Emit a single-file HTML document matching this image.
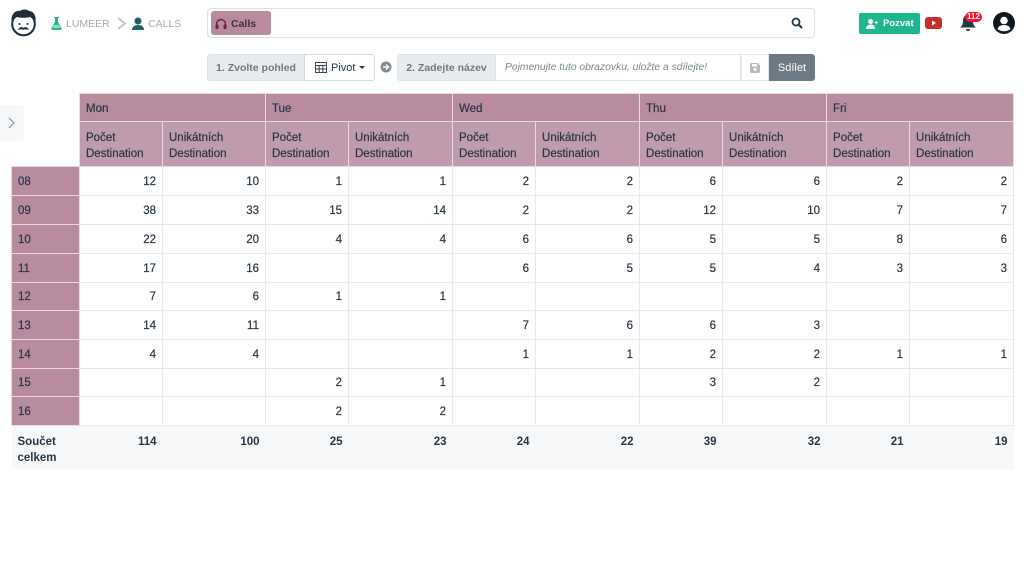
<!DOCTYPE html>
<html><head><meta charset="utf-8">
<style>
*{box-sizing:border-box}
html,body{margin:0;padding:0;width:1024px;height:564px;overflow:hidden;background:#fff;font-family:"Liberation Sans",sans-serif;color:#253746}
.a{position:absolute}
table{position:absolute;left:11px;top:93px;width:1002px;border-collapse:collapse;table-layout:fixed;font-size:11.5px;color:#253746;-webkit-text-stroke:.2px #253746}
td,th{padding:1px 6px 0;font-weight:normal;text-align:right;border:1px solid #e6e9ed;overflow:hidden}
.h1{background:#b88b9f;border:1px solid #e9dbe1;text-align:left;height:28px;padding-top:2px}
.h2{background:#c09bad;border:1px solid #e9dbe1;text-align:left;line-height:16px;height:45px;padding-top:4px}
.r{background:#b88b9f;border:1px solid #e9dbe1;text-align:left}
.e{border:0;background:transparent}
tr.f td{background:#f6f8fa;border:0;font-weight:bold;vertical-align:top;padding-top:8px;line-height:16px;height:44px;-webkit-text-stroke:0}
.ft{font-size:11px;display:flex;align-items:center}
.grp{background:#e9ecef;border:1px solid #dfe3e7;color:#6c7a84;font-weight:bold;font-size:10.5px;height:27px;line-height:27px;text-align:center}
.tab{z-index:2}
</style></head><body>

<svg class="a" style="left:10px;top:8px" width="27" height="29" viewBox="0 0 27 29">
<circle cx="13.5" cy="16" r="11.3" fill="#fff" stroke="#1f2d38" stroke-width="2"/>
<path d="M2 15C0 7 5 2 10 3c2-2 7-2 9 0 5 0 8 6 6 12-1-3-3-5-5-6-4 1-9 1-13 0-2 1-4 3-5 6z" fill="#1f2d38"/>
<circle cx="9.5" cy="16" r="1" fill="#1f2d38"/><circle cx="17.5" cy="16" r="1" fill="#1f2d38"/>
<path d="M8 22c1-3 4-3.500 5.500-2 1.500-1.500 4.500-1 5.500 2-2-.8-3.800-.8-5.500-.3-1.700-.5-3.500-.5-5.500.3z" fill="#1f2d38"/>
</svg>

<svg class="a" style="left:51px;top:17px" width="11" height="13" viewBox="0 0 11 13"><path d="M3 0h5v1H7v4l4 7-1 1H1L0 12l4-7V1H3z" fill="#2bb48c"/><path d="M3 8h5l1.500 3h-8z" fill="#8fdcc4"/></svg>
<div class="a" style="left:66px;top:18px;font-size:10.500px;color:#a0adb4;line-height:13px">LUMEER</div>
<svg class="a" style="left:116px;top:17px" width="11" height="13" viewBox="0 0 11 13"><path d="M2 1l7 5.500L2 12" fill="none" stroke="#b4bdc3" stroke-width="1.500"/></svg>
<svg class="a" style="left:132px;top:17px" width="12" height="13" viewBox="0 0 12 13"><circle cx="6" cy="4" r="3.500" fill="#1f5f63"/><path d="M0 13c0-3 2-5 6-5s6 2 6 5z" fill="#1f5f63"/></svg>
<div class="a" style="left:148px;top:18px;font-size:10.500px;color:#a0adb4;line-height:13px">CALLS</div>

<div class="a" style="left:207px;top:8px;width:608px;height:30px;border:1px solid #dde2e8;border-radius:4px;background:#fff"></div>
<div class="a ft" style="left:211px;top:11px;width:60px;height:24px;background:#b88b9f;border-radius:3px;font-weight:bold;color:#3a3440;font-size:10.500px;padding-top:1px">
<svg style="margin-left:4px;margin-right:4px" width="12" height="12" viewBox="0 0 12 12"><path d="M1.500 8V6a4.500 4.500 0 0 1 9 0v2" fill="none" stroke="#6e1f45" stroke-width="1.400"/><rect x="0.500" y="6.500" width="3" height="4.500" rx="1" fill="#6e1f45"/><rect x="8.500" y="6.500" width="3" height="4.500" rx="1" fill="#6e1f45"/></svg>Calls</div>
<svg class="a" style="left:791px;top:17px" width="12" height="12" viewBox="0 0 12 12"><circle cx="5" cy="5" r="3.500" fill="none" stroke="#253746" stroke-width="1.800"/><path d="M7.500 7.500L11 11" stroke="#253746" stroke-width="2.200"/></svg>

<div class="a ft" style="left:859px;top:13px;width:61px;height:21px;background:#1fb58d;border-radius:2px;color:#fff;font-weight:bold;font-size:9.500px">
<svg style="margin-left:7px;margin-right:5px" width="12" height="10" viewBox="0 0 12 10"><circle cx="4.500" cy="2.500" r="2.500" fill="#fff"/><path d="M0 10c0-3 2-4.500 4.500-4.500S9 7 9 10z" fill="#fff"/><path d="M8.500 3.500h3.500M10.200 1.800v3.500" stroke="#fff" stroke-width="1.100"/></svg>Pozvat</div>
<svg class="a" style="left:925px;top:17px" width="17" height="12" viewBox="0 0 17 12"><rect width="17" height="12" rx="3" fill="#c4302b"/><path d="M7 3.500L11 6 7 8.500z" fill="#fff"/></svg>
<svg class="a" style="left:960px;top:14px" width="16" height="18" viewBox="0 0 16 18"><path d="M8 1c-3 0-5 2-5 6 0 3-1 5-3 6.500h16C14 12 13 10 13 7c0-4-2-6-5-6z" fill="#253746"/><path d="M6 15h4a2 2 0 0 1-4 0z" fill="#253746"/></svg>
<div class="a" style="left:965px;top:12px;width:17px;height:10px;background:#f5142c;border-radius:5px;color:#fff;font-size:8px;font-weight:bold;line-height:10px;text-align:center">112</div>
<svg class="a" style="left:993px;top:12px" width="22" height="22" viewBox="0 0 22 22"><circle cx="11" cy="11" r="11" fill="#10181f"/><circle cx="11" cy="8.500" r="3.800" fill="#fff"/><path d="M4.500 17c1-3 3.500-4 6.500-4s5.500 1 6.500 4c-3.500 3-9.500 3-13 0z" fill="#fff"/></svg>

<div class="a grp" style="left:207px;top:54px;width:98px;border-radius:3px 0 0 3px">1. Zvolte pohled</div>
<div class="a ft" style="left:304px;top:54px;width:71px;height:27px;border:1px solid #d5dae0;border-radius:0 3px 3px 0;color:#253746;background:#fff">
<svg style="margin-left:10px;margin-right:4px" width="12" height="11" viewBox="0 0 12 11"><path d="M.5.500h11v10H.5zM.5 3.500h11M.5 7h11M4.200 3.500v7M7.800 3.500v7" fill="none" stroke="#3a4853" stroke-width="1"/></svg>Pivot
<span style="margin-left:4px;border-top:3px solid #253746;border-left:3px solid transparent;border-right:3px solid transparent"></span></div>
<svg class="a" style="left:380px;top:61px" width="12" height="12" viewBox="0 0 12 12"><circle cx="6" cy="6" r="5.500" fill="#7d8b93"/><path d="M3 6h5M6 3.500L8.500 6 6 8.500" fill="none" stroke="#fff" stroke-width="1.400"/></svg>
<div class="a grp" style="left:397px;top:54px;width:99px;border-radius:3px 0 0 3px">2. Zadejte název</div>
<div class="a" style="left:496px;top:54px;width:245px;height:27px;border:1px solid #e3e6ea;border-left:0;font-style:italic;font-size:10.300px;line-height:26px;padding-left:9px;color:#78868f;white-space:nowrap">Pojmenujte tuto obrazovku, uložte a sdílejte!</div>
<div class="a" style="left:741px;top:54px;width:28px;height:27px;border:1px solid #e3e6ea;border-left:1px solid #e3e6ea"></div>
<svg class="a" style="left:750px;top:63px" width="10" height="10" viewBox="0 0 10 10"><path d="M0 1l1-1h6.500L10 2.500V9l-1 1H1L0 9z" fill="#b4bcc2"/><rect x="2" y="1" width="5" height="2.500" fill="#fff"/><circle cx="5" cy="6.500" r="1.500" fill="#fff"/></svg>
<div class="a" style="left:769px;top:54px;width:46px;height:27px;background:#6c7a85;border-radius:0 3px 3px 0;color:#fff;font-size:11px;line-height:28px;text-align:center">Sdílet</div>

<div class="a tab" style="left:0;top:105px;width:24px;height:36px;background:#f6f7f8;border-radius:0 3px 3px 0"></div>
<svg class="a tab" style="left:8px;top:117px" width="7" height="12" viewBox="0 0 7 12"><path d="M1 1l5 5-5 5" fill="none" stroke="#7f8a92" stroke-width="1.100"/></svg>

<table>
<colgroup><col style="width:68px"><col style="width:83px"><col style="width:103px"><col style="width:83px"><col style="width:104px"><col style="width:83px"><col style="width:104px"><col style="width:83px"><col style="width:104px"><col style="width:83px"><col style="width:104px"></colgroup>
<tr style="height:28px"><td class="e" style="border:0"></td><th class="h1" colspan="2">Mon</th><th class="h1" colspan="2">Tue</th><th class="h1" colspan="2">Wed</th><th class="h1" colspan="2">Thu</th><th class="h1" colspan="2">Fri</th></tr>
<tr style="height:45px"><td class="e" style="border:0"></td>
<th class="h2">Počet Destination</th><th class="h2">Unikátních Destination</th>
<th class="h2">Počet Destination</th><th class="h2">Unikátních Destination</th>
<th class="h2">Počet Destination</th><th class="h2">Unikátních Destination</th>
<th class="h2">Počet Destination</th><th class="h2">Unikátních Destination</th>
<th class="h2">Počet Destination</th><th class="h2">Unikátních Destination</th></tr>
<tr style="height:29px"><td class="r">08</td><td>12</td><td>10</td><td>1</td><td>1</td><td>2</td><td>2</td><td>6</td><td>6</td><td>2</td><td>2</td></tr>
<tr style="height:29px"><td class="r">09</td><td>38</td><td>33</td><td>15</td><td>14</td><td>2</td><td>2</td><td>12</td><td>10</td><td>7</td><td>7</td></tr>
<tr style="height:29px"><td class="r">10</td><td>22</td><td>20</td><td>4</td><td>4</td><td>6</td><td>6</td><td>5</td><td>5</td><td>8</td><td>6</td></tr>
<tr style="height:29px"><td class="r">11</td><td>17</td><td>16</td><td></td><td></td><td>6</td><td>5</td><td>5</td><td>4</td><td>3</td><td>3</td></tr>
<tr style="height:28px"><td class="r">12</td><td>7</td><td>6</td><td>1</td><td>1</td><td></td><td></td><td></td><td></td><td></td><td></td></tr>
<tr style="height:29px"><td class="r">13</td><td>14</td><td>11</td><td></td><td></td><td>7</td><td>6</td><td>6</td><td>3</td><td></td><td></td></tr>
<tr style="height:29px"><td class="r">14</td><td>4</td><td>4</td><td></td><td></td><td>1</td><td>1</td><td>2</td><td>2</td><td>1</td><td>1</td></tr>
<tr style="height:28px"><td class="r">15</td><td></td><td></td><td>2</td><td>1</td><td></td><td></td><td>3</td><td>2</td><td></td><td></td></tr>
<tr style="height:29px"><td class="r">16</td><td></td><td></td><td>2</td><td>2</td><td></td><td></td><td></td><td></td><td></td><td></td></tr>
<tr class="f" style="height:44px"><td style="text-align:left">Součet celkem</td><td>114</td><td>100</td><td>25</td><td>23</td><td>24</td><td>22</td><td>39</td><td>32</td><td>21</td><td>19</td></tr>
</table>
</body></html>
